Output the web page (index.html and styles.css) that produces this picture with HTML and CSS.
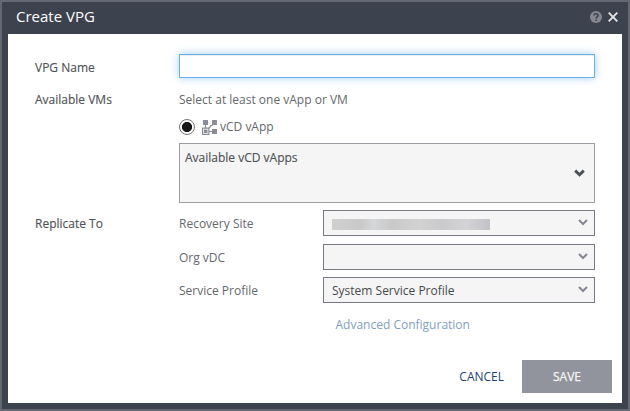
FILE: index.html
```html
<!DOCTYPE html>
<html lang="en">
<head>
<meta charset="utf-8">
<title>Create VPG</title>
<link rel="stylesheet" href="styles.css">
</head>
<body>
<div class="dialog">
  <header class="titlebar">
    <h1 class="title">Create VPG</h1>
    <svg class="help" width="12" height="12" viewBox="0 0 12 12"><circle cx="6" cy="6" r="6" fill="#858791"/><path d="M4 4.6C4 2.2 8 2.2 8 4.5C8 5.8 6.2 5.8 6.2 7.4M6.2 8.4V9.9" fill="none" stroke="#3d434e" stroke-width="1.6"/></svg>
    <svg class="close" width="10" height="10" viewBox="0 0 10 10"><path d="M.7.7 9.3 9.3M9.3.7.7 9.3" stroke="#e4e4e6" stroke-width="1.9"/></svg>
  </header>
  <main class="content">
    <div class="row row-name">
      <label class="section" for="vpg">VPG Name</label>
      <input class="name-input" id="vpg" type="text">
    </div>
    <div class="row row-vms">
      <span class="section">Available VMs</span>
      <span class="hint">Select at least one vApp or VM</span>
    </div>
    <div class="option">
      <span class="radio"></span>
      <svg class="vapp-icon" width="15" height="15" viewBox="0 0 15 15"><g fill="#8b8d96"><path d="M1 0h5v5H1zM10 0h5v5h-5zM10 9h5v5h-5z"/><path d="M3 5h1v3H3zM7 11h3v1H7z"/></g><path d="M.6 8.100h6.300v6.300H.6z" fill="#fff" stroke="#8b8d96" stroke-width="1.200"/><path d="M2 9.500h3.500V13H2z" fill="#8b8d96"/><path d="M6.500 8.500 8.500 6.500V5.500H10L11 4" fill="none" stroke="#8b8d96" stroke-width="1.200"/></svg>
      <span class="option-text">vCD vApp</span>
    </div>
    <div class="picker">
      <span class="picker-text">Available vCD vApps</span>
      <svg class="picker-arrow" width="11" height="8" viewBox="0 0 11 8"><path d="M1.200 1.600 5.500 5.700 9.800 1.600" fill="none" stroke="#4b5054" stroke-width="2.900"/></svg>
    </div>
    <div class="row field">
      <span class="section">Replicate To</span>
      <span class="sub">Recovery Site</span>
      <div class="select"><span class="redacted"></span><svg class="arrow" width="10" height="7" viewBox="0 0 10 7"><path d="M1 1 5 5 9 1" fill="none" stroke="#858891" stroke-width="2"/></svg></div>
    </div>
    <div class="row field field-org">
      <span class="section"></span>
      <span class="sub">Org vDC</span>
      <div class="select"><svg class="arrow" width="10" height="7" viewBox="0 0 10 7"><path d="M1 1 5 5 9 1" fill="none" stroke="#858891" stroke-width="2"/></svg></div>
    </div>
    <div class="row field field-profile">
      <span class="section"></span>
      <span class="sub">Service Profile</span>
      <div class="select"><span class="select-text">System Service Profile</span><svg class="arrow" width="10" height="7" viewBox="0 0 10 7"><path d="M1 1 5 5 9 1" fill="none" stroke="#858891" stroke-width="2"/></svg></div>
    </div>
    <a class="advanced">Advanced Configuration</a>
    <footer class="actions">
      <span class="cancel">CANCEL</span>
      <span class="save">SAVE</span>
    </footer>
  </main>
</div>
</body>
</html>
```
FILE: styles.css
```css
* { box-sizing: border-box; }
body { margin: 0; font: 12px/18px "Open Sans", sans-serif; color: #65686c; white-space: nowrap; }
.dialog { width: 630px; height: 411px; border: 2px solid #636873; background: #3d434e; padding: 0 6px 6px; display: flex; flex-direction: column; }
.titlebar { height: 32px; flex: none; display: flex; align-items: center; padding: 0 4px 2px 8px; }
.title { margin: 0 auto 2px 0; font-size: 15px; line-height: 20px; font-weight: 400; color: #fff; }
.help { margin-right: 6px; }
.content { flex: 1; background: #fff; padding: 20px 27px 0; display: flex; flex-direction: column; }
.row { display: flex; align-items: center; }
.section { width: 144px; flex: none; color: #505356; -webkit-text-stroke: .15px #505356; }
.row-name { height: 24px; }
.row-name .section { padding-top: 4px; }
.name-input { width: 416px; height: 24px; border: 1px solid #66afe9; background: #fff; outline: 0; padding: 0 7px; box-shadow: 0 0 8px rgba(102,175,233,.6), inset 0 1px 1px rgba(0,0,0,.075); }
.row-vms { margin-top: 13px; height: 18px; }
.option { display: flex; align-items: center; height: 18px; margin: 9px 0 0 144px; }
.radio { width: 16px; height: 16px; border: 1px solid #777; border-radius: 50%; background: radial-gradient(circle, #181818 4.700px, #fff 5.400px); margin-right: 7px; }
.vapp-icon { margin-right: 3px; }
.picker { margin: 7px 0 0 144px; width: 416px; height: 60px; background: #f5f5f5; border: 1px solid #9c9ea4; display: flex; justify-content: space-between; padding: 5px 9px 0 5px; }
.picker-text { color: #505356; -webkit-text-stroke: .15px #505356; }
.picker-arrow { margin-top: 20px; }
.field { height: 26px; margin-top: 7px; }
.field .section, .sub { padding-top: 2px; }
.field-org { margin-top: 8px; }
.sub { width: 144px; flex: none; }
.select { width: 272px; height: 26px; background: #f5f5f5; border: 1px solid #747982; padding: 0 6px 0 8px; display: flex; align-items: center; color: #464a4e; }
.select-text { padding-top: 2px; }
.arrow { margin: 0 0 1px auto; }
.redacted { width: 158px; height: 11px; margin-top: 3px; background: linear-gradient(90deg, #d0d0d0, #c9c9c9 18%, #d5d6d8 26%, #c9c9c9 38%, #d2d2d3 55%, #cacacc 70%, #d4d4d6 85%, #c2c3c8); }
.advanced { margin: 13px 0 0 300.5px; color: #7f9fbe; }
.actions { display: flex; justify-content: flex-end; align-items: center; margin: 26px -17px 0 0; }
.cancel { color: #1d3f78; margin-right: 18px; }
.save { width: 90px; height: 33px; background: #91949c; color: #f5f5f5; line-height: 33px; text-align: center; -webkit-text-stroke: .25px #f5f5f5; }
```
